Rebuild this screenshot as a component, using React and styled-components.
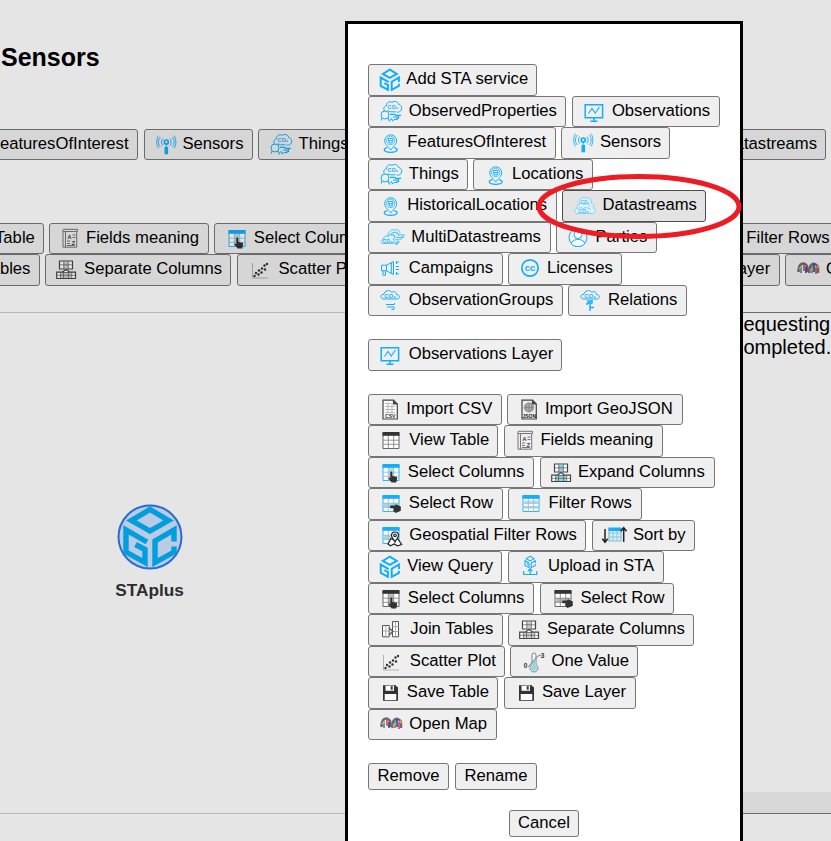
import React from "react";
import styled, { createGlobalStyle, css } from "styled-components";

const BLUE = "#12aefb";
const DARK = "#333333";

const GlobalStyle = createGlobalStyle`
  * { box-sizing: border-box; }
  html, body { margin: 0; height: 100%; overflow: hidden; background: #fff; }
  body { font-family: "Liberation Sans", Arial, sans-serif; color: #000; }
`;

const Page = styled.div`
  position: relative;
  width: 831px;
  height: 841px;
  overflow: hidden;
`;

const Title = styled.h1`
  margin: 0;
  height: 128.6px;
  padding: 43px 0 0 1px;
  font-size: 25px;
  line-height: 29px;
  font-weight: 700;
`;

const ToolRow = styled.div`
  display: flex;
  gap: 5.2px;
  height: 31.5px;
  width: max-content;
  margin-left: ${(p) => p.$shift || 0}px;
  margin-bottom: ${(p) => p.$after || 0}px;
`;

const ToolButton = styled.button`
  display: flex;
  flex: none;
  align-items: flex-start;
  width: ${(p) => p.$w}px;
  height: 31.5px;
  padding: 0;
  border: 1px solid ${(p) => (p.$active ? "#4d4d4d" : "#767676")};
  border-radius: 3px;
  background: ${(p) => (p.$active ? "#e3e3e3" : "#efefef")};
  color: #000;
  font: 16.67px/19px "Liberation Sans", Arial, sans-serif;
  white-space: nowrap;
`;

const IconSlot = styled.span`
  flex: none;
  display: block;
  width: ${(p) => p.$w - 0.7}px;
  padding: 3px 0 0 10px;

  svg { display: block; overflow: visible; }
`;

const Caption = styled.span`
  padding-top: 4px;
`;

const PlainButton = styled.button`
  width: ${(p) => p.$w}px;
  height: 27px;
  padding: 0 0 2px;
  border: 1px solid #767676;
  border-radius: 3px;
  background: #efefef;
  color: #000;
  font: 16.67px/19px "Liberation Sans", Arial, sans-serif;
`;

const Workspace = styled.div`
  display: grid;
  grid-template-columns: 724px 1fr;
  height: 502px;
  margin-top: 26px;
`;

const Canvas = styled.div`
  display: flex;
  flex-direction: column;
  align-items: center;
  width: 724px;
  padding: 191px 425px 0 0;
  border: solid #cdcdcd;
  border-width: 1px 0;
`;

const NodeLabel = styled.div`
  margin-top: 10px;
  color: ${DARK};
  font-size: 17.2px;
  line-height: 20px;
  font-weight: 700;
`;

const Log = styled.div`
  display: flex;
  flex-direction: column;
  justify-content: space-between;
  border: solid #767676;
  border-width: 1px 0 1px 1px;
`;

const LogText = styled.div`
  padding-left: 4px;
  font-size: 20px;
  line-height: 23px;
  white-space: nowrap;
`;

const ScrollTrack = styled.div`
  height: 21px;
  background: #f0f0f0;
`;

const Backdrop = styled.div`
  position: absolute;
  inset: 0;
  background: rgba(0, 0, 0, 0.1);
`;

const Dialog = styled.div`
  position: absolute;
  left: 345px;
  top: 21px;
  width: 398px;
  height: 860px;
  padding: 40.3px 20px 0;
  border: 3px solid #000;
  background: #fff;
`;

const Footer = styled.div`
  display: flex;
  gap: 6px;
  height: 27px;
  ${(p) =>
    p.$center &&
    css`
      justify-content: center;
      margin-top: 19.6px;
    `}
`;

const Marker = styled.svg`
  position: absolute;
  left: 535px;
  top: 172px;
`;

const Svg = ({ children, c = BLUE, w = 1.2 }) => (
  <svg width="24" height="24" viewBox="0 0 24 24" fill="none" stroke={c} strokeWidth={w}>
    {children}
  </svg>
);

const Cube = () => (
  <>
    <path d="M30.5 5.5 49 16.5 30.5 27 12 16.500Z" />
    <path d="M27.5 38 6.500 26V48L25.500 58.500V45.500L16 40.500" />
    <path d="M54.500 37.500V26L35.500 37V58.500L54.500 48V42.500" />
  </>
);

const Tiny = ({ x, y, s = 5, children }) => (
  <text x={x} y={y} fontSize={s} fontWeight="700" stroke="none" fill="currentColor" textAnchor="middle" fontFamily="Liberation Sans, sans-serif">
    {children}
  </text>
);

const Grid = ({ c = BLUE, header = c, children }) => (
  <>
    <path d="M4 4h16v15.5H4z" fill="#fff" stroke={c} strokeWidth=".9" />
    {children}
    <path d="M4 11.2h16M4 15.3h16M9.3 6v13.5M14.7 6v13.5" stroke={c === BLUE ? "#9bbccc" : "#888"} strokeWidth=".9" />
    <path d="M3.5 3h17v3.8h-17z" fill={header} stroke="none" />
  </>
);

const HandUp = () => (
  <path d="M11.3 11.5c0-1.4 2-1.4 2 0v3.4l4 .9c1 .3 1 1 .8 2l-.9 3.7h-4.6l-3.2-4c-.4-1 .6-1.5 1.9-.3z" fill={DARK} stroke="none" />
);
const HandSide = () => (
  <path d="M12 13.5h4l1-1.3 4.8 2.4v4.2l-5.3 2.1-2-1.7v-2.9H12c-1.5-.3-1.5-2.5 0-2.8z" fill={DARK} stroke="none" />
);

const Split = ({ fill }) => (
  <g stroke="#444" strokeWidth="1.2">
    <path d="M3.5 3h13v8h-13z" fill="#fff" />
    <path d="M7.5 4h5v6h-5z" fill={fill} stroke="none" />
    <path d="M3.5 6.8h13M7.8 3v8M12.3 3v8" strokeWidth=".6" />
    <path d="M.7 14.2h18.8v6.3H.7z" fill="#fff" />
    <path d="M4.5 15h10.8v5H4.5z" fill={fill} stroke="none" />
    <path d="M.7 17.3h18.8M4.5 14v6.5M7.5 14v6.5M12.5 14v6.5M15.7 14v6.5" strokeWidth=".6" />
    <path d="m6.5 14 3.5-2.5 3.5 2.5" fill="#fff" />
  </g>
);

const cloud = "M4 10C.6 9 1.5 5 4.7 5.5 5.5 1.5 10.5.3 12.7 3.2 15.8 1.5 18 4 17.3 5.5 21.5 5.7 21 10 18 10Z";

const icons = {
  ogc: () => (
    <svg width="22" height="24" viewBox="2 1 58 63" preserveAspectRatio="none" fill="none" stroke={BLUE} strokeWidth="5.2"><Cube /></svg>
  ),
  thing: () => (
    <Svg w="1">
      <path d="M5.5 11C4 8.6 5 6 7.4 6 7 2.4 11 .8 13 2.4c2.8-2 6.6-.5 6.6 2.2 3.4.3 4 4.3 2 6.4-1 1.4-3 1-4 1M8.5 10.7l3 1.1h5" />
      <g color={BLUE}><Tiny x="13.8" y="9" s="5.5">CO₂</Tiny></g>
      <circle cx="6" cy="15" r="4" />
      <path d="m8.7 18 2.3 3.5M11 14.3h4.5l1.5 1h5M14 17h4v2.5h-3M11.5 18.5l3 2.5M19.5 15.5v3.5M2.5 18.5v2" strokeWidth="1.2" />
    </Svg>
  ),
  pin: () => (
    <Svg w="1">
      <path d="M11.7 19C9.5 15.5 5.7 13.6 5.7 9.8a6 6 0 0 1 12 0c0 3.8-3.8 5.7-6 9.2Z" />
      <circle cx="11.7" cy="9.5" r="4.2" strokeWidth=".7" />
      <path d="M9.3 7.5h4.8v2.2H9.3zM10.2 9.7v2.3h3V9.7" strokeWidth=".9" />
      <path d="M8.5 16.7c-5 .7-4.5 4.6 3.2 4.6s8.2-3.9 3.2-4.6" strokeWidth="1.3" />
    </Svg>
  ),
  sensor: () => (
    <Svg w=".9">
      <circle cx="11.3" cy="9" r="2" strokeWidth="1.7" />
      <path d="M11.3 11v4" />
      <path d="M9.5 14h3.6v7.3H9.5z" fill={BLUE} stroke="none" />
      <path d="M7.8 5.5c-1.8 2-1.8 5 0 7M5.4 4c-2.6 3-2.6 7 0 10M3.4 2.7c-2.2 4-2.2 8.8 0 12.6M14.8 5.5c1.8 2 1.8 5 0 7M17.2 4c2.6 3 2.6 7 0 10M19.2 2.7c2.2 4 2.2 8.8 0 12.6" />
    </Svg>
  ),
  monitor: () => (
    <Svg w="1.5">
      <path d="M2.2 4.7h17.4v13H2.2zM11 17.7v3M7.5 21.3h7" /><path d="m5.5 13.5 3.5-5 3.2 4.5 4.3-6" strokeWidth="1.1" />
    </Svg>
  ),
  streams: () => (
    <Svg c="#70cdfa" w=".9">
      <path d="M3.5 19.5c-3-2-1.8-5 .8-5-.8-2 0-4 2-4-1-5 3-8 6-6.5 4-1 7 2 6 5.5 3 0 3 3 1.6 4.5 3 1 2.7 4.5.3 5.5Z" fill="#dff2fb" />
      <path d="M6 10.5c2-2 4-1 5 0 2-1 5-1 6 2M5 14.5c2-1.5 3.5-1 5 0 2-1.5 5-1 8 1" />
      <g color="#45bff9"><Tiny x="12" y="9.5" s="4.5">CO₂</Tiny><Tiny x="10.5" y="18.5" s="5.5">CO₂</Tiny></g>
    </Svg>
  ),
  multi: () => (
    <Svg c="#55c1f6" w=".9">
      <path d="M3 17.5c-2-2-1-4 1.5-4 0-3 2-4 4-3.2C9 5 13 2.5 16 4c3-1 5 1 5 3.5M3 17.5h9.5l4-4h3l-1.5 4h-5.5" fill="#d9f0fb" />
      <path d="M9 10c2-2 6-2 7 1l-2 3M12 8c3-3 7-2 8 2M20 9h5l-2.5 3M17 11.5h8M20 13h3M16 16h4l-3 3" strokeWidth="1.1" />
      <g color={BLUE}><Tiny x="8.5" y="16.8" s="5">CO₂</Tiny></g>
    </Svg>
  ),
  party: () => (
    <Svg w="1">
      <circle cx="11" cy="11.5" r="9" /><circle cx="11" cy="8.5" r="4" fill="#fff" />
      <path d="M4.5 18c-.5-6 13.5-6 13 0-3 3.3-10 3.3-13 0Z" fill="#fff" />
    </Svg>
  ),
  campaign: () => (
    <Svg w="1">
      <path d="M2.5 8.2h5v5.6h-5zM7.5 8.2l7-3.7v13l-7-3.7M4 13.8v4.5h2.5v-4.5M12.3 5.7v10.6M17.5 4v3M17.5 15v3M17 9.5h3M17 12.5h3M18 6l2-1.5M18 16l2 1.5" />
    </Svg>
  ),
  license: () => (
    <Svg w="1.7">
      <circle cx="11" cy="11" r="8.2" /><g color={BLUE}><Tiny x="11" y="14" s="9.5">cc</Tiny></g>
    </Svg>
  ),
  group: () => (
    <Svg w="1"><path d={cloud} /><g color={BLUE}><Tiny x="11" y="9" s="6">CO₂</Tiny></g><path d="M7 15.5h8.5V14M8 18h7v2.5h-2.5" /></Svg>
  ),
  relation: () => (
    <Svg w="1"><path d={cloud} /><g color={BLUE}><Tiny x="11" y="9" s="6">CO₂</Tiny></g><path d="M9 12h4v2H9zM11 14v8M11 18.5h4M7 15h2" strokeWidth="1.4" /></Svg>
  ),
  csv: () => (
    <Svg c="#444"><path d="M4 2.2h10.5L18.3 6v15H4z" fill="#fafafa" /><path d="M14.5 2.2V6h3.8" fill="#444" /><path d="M6 5.5h6M6 8.5h10M6 11.5h10M6 14.5h10M9 5v10M13 5v10" stroke="#aaa" strokeWidth=".8" /><g color="#333"><Tiny x="11.2" y="20" s="5">CSV</Tiny></g></Svg>
  ),
  json: () => (
    <Svg c="#444"><path d="M4 2.2h10.5L18.3 6v15H4z" fill="#eee" /><path d="M14.5 2.2V6h3.8" fill="#444" /><circle cx="11" cy="9.5" r="4.7" fill="#aaa" stroke="#888" strokeWidth=".7" /><path d="M6.5 9.5h9M11 5v9M8 6v7M14 6v7" stroke="#777" strokeWidth=".6" /><g color="#222"><Tiny x="11.2" y="20" s="5">JSON</Tiny></g></Svg>
  ),
  table: () => <Svg c="#555"><Grid c="#555" header={DARK} /></Svg>,
  fields: () => (
    <Svg c="#666" w=".9"><path d="M3 4c-1-1 0-1.7 1-1.7h13.5v2H16.7v15.9H3z" fill="#eee" /><path d="M3 4.5h13.7M5.5 5v15M12.5 8h3M12.5 10.5h3M7 14h3M7 16.5h3M7 18.5h8" /><g color="#333"><Tiny x="9.5" y="11.8" s="5.5">A</Tiny><Tiny x="13.5" y="18" s="5.5">Z</Tiny></g></Svg>
  ),
  selectCol: () => <Svg><Grid><path d="M9.5 6h5v13h-5z" fill="#addbea" stroke="none" /></Grid><HandUp /></Svg>,
  selectColDark: () => <Svg><Grid c="#555" header={DARK}><path d="M9.5 6h5v13h-5z" fill="#bbb" stroke="none" /></Grid><HandUp /></Svg>,
  selectRow: () => <Svg><Grid><path d="M4.5 11h15v4.5h-15z" fill="#a8d5e5" stroke="none" /></Grid><HandSide /></Svg>,
  selectRowDark: () => <Svg><Grid c="#555" header={DARK}><path d="M4.5 11h15v4.5h-15z" fill="#bbb" stroke="none" /></Grid><HandSide /></Svg>,
  filter: () => <Svg><Grid><path d="M4.5 8.5h15v3h-15zM4.5 14h15v2.5h-15z" fill="#b4dfed" stroke="none" /></Grid></Svg>,
  geoFilter: () => (
    <Svg><Grid><path d="M4.5 11h8v5h-8z" fill="#a8d5e5" stroke="none" /></Grid><g stroke="#222" fill="#fff"><path d="m9 20 3-5.5 3 1.5 3.5-1.5 4.2 6-4.2 1.3-3.5-1.8-3.5 1.8Z" /><path d="M16 18c-1-3-3.5-4-3.5-6.5a3.5 3.5 0 0 1 7 0C19.5 14 17 15 16 18Z" /><circle cx="16" cy="11.3" r="1.3" /></g></Svg>
  ),
  expand: () => <Svg><Split fill="#8fd0e2" /></Svg>,
  separate: () => <Svg><Split fill="#ccc" /></Svg>,
  sort: () => (
    <Svg><path d="M6 4.5h12V17H6z" fill="#d5edf5" stroke="#83bdd2" /><path d="M6 9h12M6 13h12M10 5v12M14 5v12" stroke="#83bdd2" strokeWidth=".8" /><path d="M5.5 3.5h13V7h-13z" fill={BLUE} stroke="none" /><path d="M2 5v13M-.7 14.8 2 18.2l2.7-3.4M20.7 18V4M17.8 7.2l2.9-3.5 2.9 3.5" stroke="#222" strokeWidth="1.5" /></Svg>
  ),
  upload: () => (
    <Svg><svg x="5" y="0" width="12.5" height="14" viewBox="2 1 58 62" stroke={BLUE} strokeWidth="5" fill="none"><Cube /></svg><path d="M4.7 16v3.5h13V16M11.2 19v-5M9 16l2.2-2.2 2.2 2.2" /></Svg>
  ),
  join: () => (
    <Svg c="#555" w="1"><path d="M3.5 7.5h6.7v11.3H3.5zM13.5 3.5h6v15.3h-6z" fill="#fff" /><path d="M3.5 13h6.7M6.8 7.5v11.3M13.5 8.5h6M13.5 13.5h6M16.5 3.5v15.3" stroke="#999" strokeWidth=".8" /><path d="m10 10 4 3.5-4 3.5" strokeWidth="1.3" /></Svg>
  ),
  scatter: () => (
    <Svg c="#aaa" w=".9"><path d="M4.5 5v15H20" /><g fill={DARK} stroke="none">{[[6.5,18],[8,15],[10.5,16.5],[11,12.5],[13.5,14.5],[14,10.5],[17,11.5],[16.5,7.5],[19,6]].map(([x, y]) => <circle key={`${x}-${y}`} cx={x} cy={y} r="1.2" />)}</g></Svg>
  ),
  value: () => (
    <Svg c="#777" w=".9"><path d="M11 14.5V5a2 2 0 0 1 4 0v9.5a4 4 0 1 1-4 0Z" fill="#f6f6f6" /><path d="M11.7 10h2.6v5.2a3 3 0 1 1-2.6 0Z" fill="#93d5e8" stroke="none" /><path d="m7 17 10-11 3-1" /><g color="#333"><Tiny x="4.5" y="18" s="6.5">0</Tiny><Tiny x="21.5" y="8" s="6.5">3</Tiny></g></Svg>
  ),
  save: () => (
    <Svg><path d="M4 4.2h12.5L19 6.5v13.3H4z" fill={DARK} stroke="none" /><path d="M6.5 4.8h8.5v5H6.5zM5.7 13h11.6v6H5.7z" fill="#fff" stroke="none" /><path d="M11.7 5.2h2v3.5h-2z" fill={DARK} stroke="none" /></Svg>
  ),
  map: () => (
    <Svg w="1.7"><path d="M2.5 14C2.5 5 8 3.500 11 8v6M13.500 15c-1-9 5-12 8.500-6v6" stroke="#726579" strokeWidth="2.5" /><path d="M5 8v7M16 7v8" stroke="#369b9b" /><path d="M8 6v7M20 9v7" stroke="#cb5061" /><path d="M10 9v6M18 6v8" stroke="#4444a0" /><path d="m3 11 3-3M14 13l3-3M21 8l1.5 2" stroke="#e0b63f" /></Svg>
  ),
};

// label, icon, button width, caption offset
const T = {
  add: ["Add STA service", "ogc", 169, 38],
  observed: ["ObservedProperties", "thing", 198.4, 40.5],
  observations: ["Observations", "monitor", 148, 40],
  features: ["FeaturesOfInterest", "pin", 188, 39],
  sensors: ["Sensors", "sensor", 109, 38.5],
  things: ["Things", "thing", 100, 40.5],
  locations: ["Locations", "pin", 120, 38.5],
  historical: ["HistoricalLocations", "pin", 189, 39],
  data: ["Datastreams", "streams", 144, 40],
  multi: ["MultiDatastreams", "multi", 183, 43],
  parties: ["Parties", "party", 101, 39],
  campaigns: ["Campaigns", "campaign", 135, 40.5],
  licenses: ["Licenses", "license", 114, 38.5],
  groups: ["ObservationGroups", "group", 195, 40.5],
  relations: ["Relations", "relation", 119, 39.5],
  obsLayer: ["Observations Layer", "monitor", 194, 40.5],
  csv: ["Import CSV", "csv", 134, 38],
  json: ["Import GeoJSON", "json", 176, 37.5],
  view: ["View Table", "table", 130.4, 41],
  fields: ["Fields meaning", "fields", 159.7, 36.5],
  selCols: ["Select Columns", "selectCol", 166.4, 39.5],
  expand: ["Expand Columns", "expand", 175, 38],
  selRow: ["Select Row", "selectRow", 134.5, 40.5],
  filter: ["Filter Rows", "filter", 134, 40.5],
  geo: ["Geospatial Filter Rows", "geoFilter", 218.4, 41],
  sort: ["Sort by", "sort", 103, 41],
  query: ["View Query", "ogc", 134.4, 39],
  upload: ["Upload in STA", "upload", 156, 40],
  selColsD: ["Select Columns", "selectColDark", 166.4, 39.5],
  selRowD: ["Select Row", "selectRowDark", 134, 40.5],
  join: ["Join Tables", "join", 135, 42],
  separate: ["Separate Columns", "separate", 186.2, 38.5],
  scatter: ["Scatter Plot", "scatter", 137, 41.5],
  value: ["One Value", "value", 128, 41],
  saveTable: ["Save Table", "save", 130.4, 38.5],
  saveLayer: ["Save Layer", "save", 132, 38],
  openMap: ["Open Map", "map", 129, 41],
};

function Tools({ ids, shift, after, active }) {
  return (
    <ToolRow $shift={shift} $after={after}>
      {ids.split(" ").map((id) => {
        const [label, icon, width, slot] = T[id];
        const Icon = icons[icon];
        return (
          <ToolButton key={id} $w={width} $active={active === id}>
            <IconSlot $w={slot}><Icon /></IconSlot>
            <Caption>{label}</Caption>
          </ToolButton>
        );
      })}
    </ToolRow>
  );
}

export default function App() {
  return (
    <Page>
      <GlobalStyle />
      <Title>Sensors</Title>
      <Tools ids="features sensors things locations historical data" shift={-49.6} after={62.7} />
      <Tools ids="view fields selCols expand selRow filter" shift={-86.4} />
      <Tools ids="join separate scatter value saveTable saveLayer openMap" shift={-94.9} />
      <Workspace>
        <Canvas>
          <svg width="66" height="66" viewBox="0 0 66 66" fill="none">
            <circle cx="33" cy="33" r="31.5" fill="#d2e2ff" stroke="#2f78e8" strokeWidth="2" />
            <g transform="translate(2.5 0)" stroke="#00b0f6" strokeWidth="5.4"><Cube /></g>
          </svg>
          <NodeLabel>STAplus</NodeLabel>
        </Canvas>
        <Log>
          <LogText>Requesting<br />Completed.</LogText>
          <ScrollTrack />
        </Log>
      </Workspace>
      <Backdrop />
      <Dialog>
        <Tools ids="add" />
        <Tools ids="observed observations" />
        <Tools ids="features sensors" />
        <Tools ids="things locations" />
        <Tools ids="historical data" active="data" />
        <Tools ids="multi parties" />
        <Tools ids="campaigns licenses" />
        <Tools ids="groups relations" after={23} />
        <Tools ids="obsLayer" after={23.1} />
        <Tools ids="csv json" />
        <Tools ids="view fields" />
        <Tools ids="selCols expand" />
        <Tools ids="selRow filter" />
        <Tools ids="geo sort" />
        <Tools ids="query upload" />
        <Tools ids="selColsD selRowD" />
        <Tools ids="join separate" />
        <Tools ids="scatter value" />
        <Tools ids="saveTable saveLayer" />
        <Tools ids="openMap" after={22.6} />
        <Footer><PlainButton $w={81}>Remove</PlainButton><PlainButton $w={82}>Rename</PlainButton></Footer>
        <Footer $center><PlainButton $w={70}>Cancel</PlainButton></Footer>
      </Dialog>
      <Marker width="208" height="69" fill="none" stroke="#ed1c24" strokeWidth="5">
        <ellipse cx="104" cy="34.5" rx="100" ry="30" />
      </Marker>
    </Page>
  );
}
